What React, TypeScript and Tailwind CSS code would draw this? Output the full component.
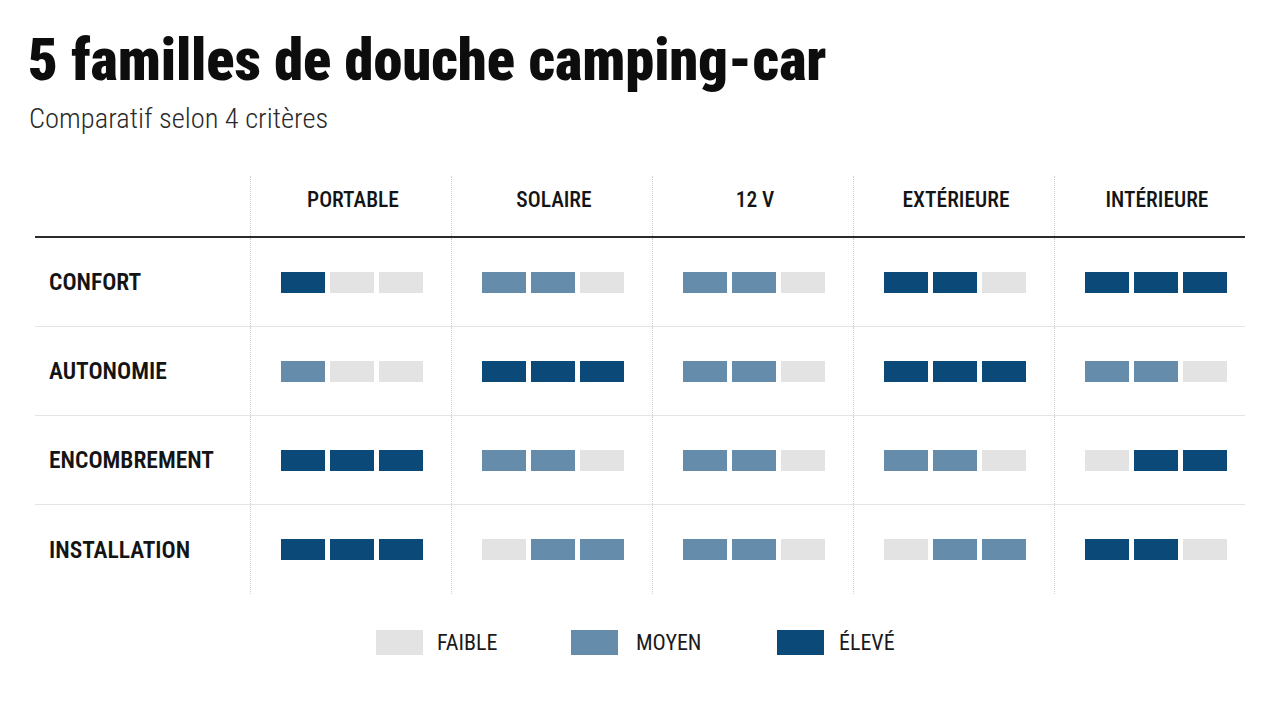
type Lvl = "L" | "M" | "D";

const columns = ["PORTABLE", "SOLAIRE", "12 V", "EXTÉRIEURE", "INTÉRIEURE"];

const rows: { label: string; values: Lvl[][] }[] = [
  {
    label: "CONFORT",
    values: [
      ["D", "L", "L"],
      ["M", "M", "L"],
      ["M", "M", "L"],
      ["D", "D", "L"],
      ["D", "D", "D"],
    ],
  },
  {
    label: "AUTONOMIE",
    values: [
      ["M", "L", "L"],
      ["D", "D", "D"],
      ["M", "M", "L"],
      ["D", "D", "D"],
      ["M", "M", "L"],
    ],
  },
  {
    label: "ENCOMBREMENT",
    values: [
      ["D", "D", "D"],
      ["M", "M", "L"],
      ["M", "M", "L"],
      ["M", "M", "L"],
      ["L", "D", "D"],
    ],
  },
  {
    label: "INSTALLATION",
    values: [
      ["D", "D", "D"],
      ["L", "M", "M"],
      ["M", "M", "L"],
      ["L", "M", "M"],
      ["D", "D", "L"],
    ],
  },
];

const colorClass: Record<Lvl, string> = {
  L: "bg-[#e3e3e3]",
  M: "bg-[#668cab]",
  D: "bg-[#0b4a78]",
};

function Bars({ values }: { values: Lvl[] }) {
  return (
    <div className="flex gap-[5px]">
      {values.map((v, i) => (
        <div key={i} className={`h-[21px] w-[44px] ${colorClass[v]}`} />
      ))}
    </div>
  );
}

export default function App() {
  return (
    <div className="h-[702px] w-[1280px] overflow-hidden bg-white font-['Roboto_Condensed',sans-serif] text-[#111]">
      <h1 className="ml-[28px] mt-[31px] text-[58.5px] font-black leading-[58px] tracking-[-0.1px] text-[#0d0d0d]">
        5 familles de douche camping-car
      </h1>
      <p className="ml-[29px] mt-[15px] text-[28.5px] font-light leading-[29px] text-[#2a2a2a]">
        Comparatif selon 4 critères
      </p>

      <div className="ml-[35px] mt-[43px] w-[1210px]">
        <div className="grid h-[62px] grid-cols-[215px_repeat(5,201px)] border-b-[2px] border-[#2b2b2b]">
          <div />
          {columns.map((c) => (
            <div
              key={c}
              className="flex justify-center border-l border-dotted border-[#cfcfcf] pl-[4px] pt-[13px] text-[21.5px] font-medium leading-[22px] text-[#141414]"
            >
              {c}
            </div>
          ))}
        </div>

        {rows.map((r, ri) => (
          <div
            key={r.label}
            className={`grid h-[89px] grid-cols-[215px_repeat(5,201px)] ${
              ri < rows.length - 1 ? "border-b border-[#e4e4e4]" : ""
            }`}
          >
            <div className="flex items-center pl-[14px] text-[23.5px] font-semibold leading-[24px] text-[#141414]">
              {r.label}
            </div>
            {r.values.map((v, ci) => (
              <div
                key={ci}
                className="flex items-center justify-center border-l border-dotted border-[#cfcfcf] pl-[2px]"
              >
                <Bars values={v} />
              </div>
            ))}
          </div>
        ))}
      </div>

      <div className="mt-[36px] grid grid-cols-[195px_206px_auto] pl-[376px]">
        <div className="flex items-center gap-[14px]">
          <div className="h-[25px] w-[47px] bg-[#e3e3e3]" />
          <span className="text-[22px] leading-[22px] text-[#1a1a1a]">FAIBLE</span>
        </div>
        <div className="flex items-center gap-[18px]">
          <div className="h-[25px] w-[47px] bg-[#668cab]" />
          <span className="text-[22px] leading-[22px] text-[#1a1a1a]">MOYEN</span>
        </div>
        <div className="flex items-center gap-[15px]">
          <div className="h-[25px] w-[47px] bg-[#0b4a78]" />
          <span className="text-[22px] leading-[22px] text-[#1a1a1a]">ÉLEVÉ</span>
        </div>
      </div>
    </div>
  );
}
